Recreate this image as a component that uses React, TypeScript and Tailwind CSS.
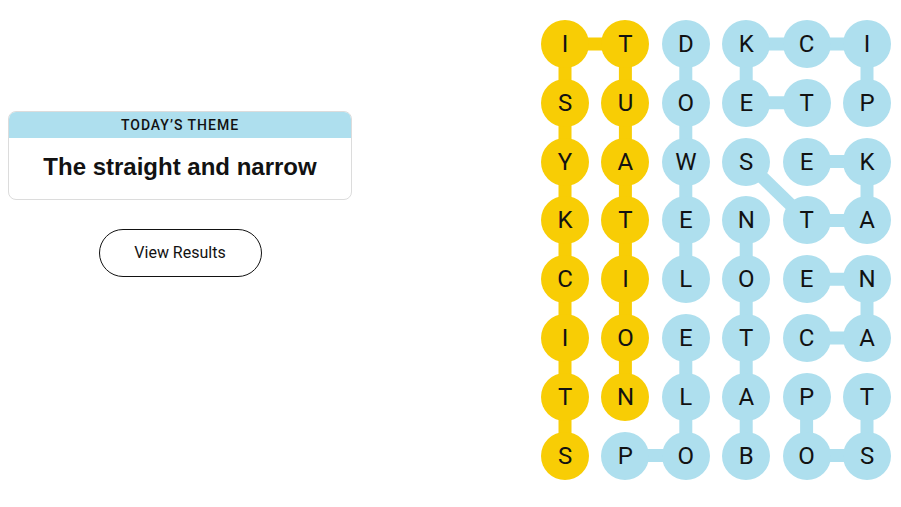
import React from 'react';

const letters = [
  'ITDKCI',
  'SUOETP',
  'YAWSEK',
  'KTENTA',
  'CILOEN',
  'IOETCA',
  'TNLAPT',
  'SPOBOS',
];

// spangram cells (yellow)
const yellowCells = new Set<string>();
for (let r = 0; r < 8; r++) yellowCells.add(`${r},0`);
for (let r = 0; r < 7; r++) yellowCells.add(`${r},1`);

type Edge = [number, number, number, number];

const yellowEdges: Edge[] = [
  [0, 0, 1, 0], [1, 0, 2, 0], [2, 0, 3, 0], [3, 0, 4, 0], [4, 0, 5, 0], [5, 0, 6, 0], [6, 0, 7, 0],
  [0, 0, 0, 1],
  [0, 1, 1, 1], [1, 1, 2, 1], [2, 1, 3, 1], [3, 1, 4, 1], [4, 1, 5, 1], [5, 1, 6, 1],
];

const blueEdges: Edge[] = [
  // DOWEL
  [0, 2, 1, 2], [1, 2, 2, 2], [2, 2, 3, 2], [3, 2, 4, 2],
  // POLE
  [7, 1, 7, 2], [7, 2, 6, 2], [6, 2, 5, 2],
  // PICKET
  [1, 5, 0, 5], [0, 5, 0, 4], [0, 4, 0, 3], [0, 3, 1, 3], [1, 3, 1, 4],
  // STAKE
  [2, 3, 3, 4], [3, 4, 3, 5], [3, 5, 2, 5], [2, 5, 2, 4],
  // BATON
  [3, 3, 4, 3], [4, 3, 5, 3], [5, 3, 6, 3], [6, 3, 7, 3],
  // CANE
  [5, 4, 5, 5], [5, 5, 4, 5], [4, 5, 4, 4],
  // POST
  [6, 4, 7, 4], [7, 4, 7, 5], [7, 5, 6, 5],
];

const SIZE = 48;
const PITCH_X = 60.4;
const PITCH_Y = 58.8;
const cx = (c: number) => SIZE / 2 + c * PITCH_X;
const cy = (r: number) => SIZE / 2 + r * PITCH_Y;

function Board() {
  const w = SIZE + 5 * PITCH_X;
  const h = SIZE + 7 * PITCH_Y;
  return (
    <div className="relative">
      <svg className="absolute inset-0" width={w} height={h} viewBox={`0 0 ${w} ${h}`}>
        {yellowEdges.map(([r1, c1, r2, c2], i) => (
          <line key={`y${i}`} x1={cx(c1)} y1={cy(r1)} x2={cx(c2)} y2={cy(r2)} stroke="#f8cd05" strokeWidth={13} />
        ))}
        {blueEdges.map(([r1, c1, r2, c2], i) => (
          <line key={`b${i}`} x1={cx(c1)} y1={cy(r1)} x2={cx(c2)} y2={cy(r2)} stroke="#aedfee" strokeWidth={13} />
        ))}
      </svg>
      <div className="relative grid grid-cols-[repeat(6,48px)] gap-x-[12.4px] gap-y-[10.8px]">
        {letters.map((row, r) =>
          row.split('').map((ch, c) => (
            <div
              key={`${r}-${c}`}
              className={`w-[48px] h-[48px] rounded-full flex items-center justify-center text-[24px] text-[#121212] font-['Roboto',sans-serif] ${
                yellowCells.has(`${r},${c}`) ? 'bg-[#f8cd05]' : 'bg-[#aedfee]'
              }`}
            >
              {ch}
            </div>
          ))
        )}
      </div>
    </div>
  );
}

export default function App() {
  return (
    <div className="w-[901px] h-[507px] bg-white flex justify-between pl-[8px] pr-[10px] pt-[20px] font-['Roboto',sans-serif] text-[#121212]">
      <div className="w-[344px] mt-[91px] flex flex-col items-center">
        <div className="w-full rounded-[8px] border border-[#dcdcdc] overflow-hidden">
          <div className="h-[26px] bg-[#aedfee] flex items-center justify-center text-[14px] font-medium tracking-[1px] uppercase">
            Today’s Theme
          </div>
          <div className="h-[61px] pb-[3px] flex items-center justify-center text-[24px] font-bold font-['Liberation_Sans',sans-serif]">
            The straight and narrow
          </div>
        </div>
        <button className="mt-[29px] w-[163px] h-[48px] rounded-full border border-[#121212] text-[16px] bg-white">
          View Results
        </button>
      </div>
      <Board />
    </div>
  );
}
